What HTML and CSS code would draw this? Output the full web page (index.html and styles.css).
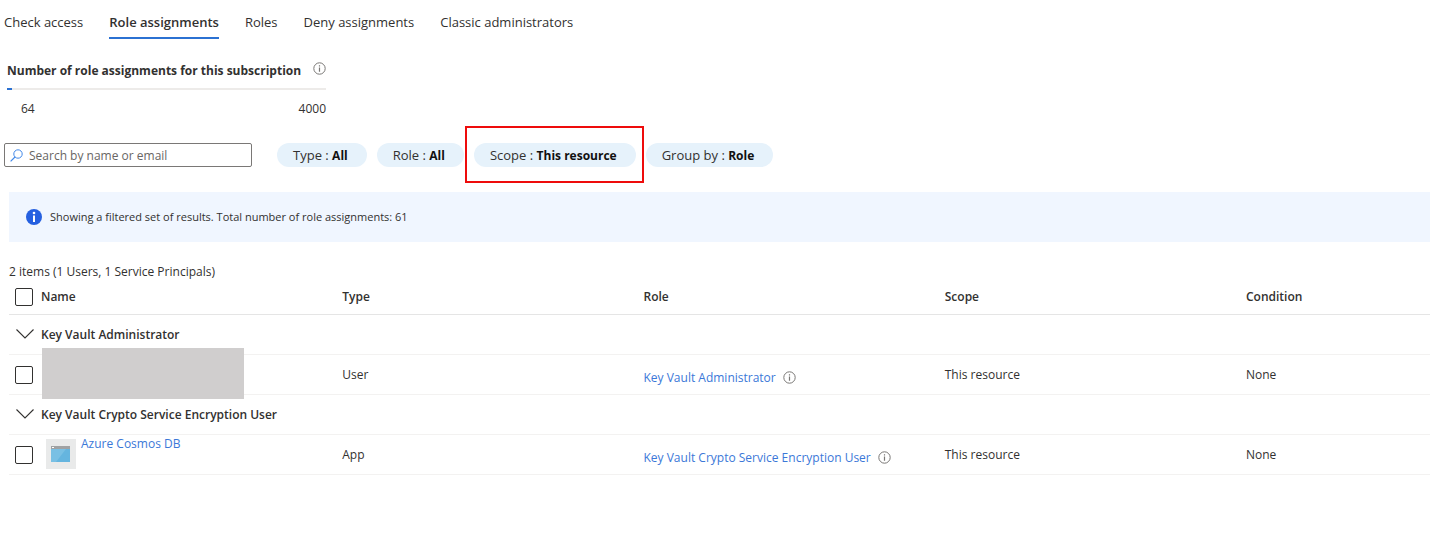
FILE: index.html
```html
<!DOCTYPE html>
<html lang="en">
<head>
<meta charset="utf-8">
<title>Role assignments</title>
<link rel="stylesheet" href="styles.css">
</head>
<body>
<svg class="defs" aria-hidden="true">
  <symbol id="info" viewBox="0 0 13 13">
    <circle cx="6.5" cy="6.5" r="5.7" fill="none" stroke="currentColor"/>
    <path d="M6.5 5.6V9.8M6.5 3.3V4.6" stroke="currentColor" stroke-width="1.2"/>
  </symbol>
  <symbol id="chevron" viewBox="0 0 18 10">
    <path d="M.5 .5L9 9L17.5 .5" fill="none" stroke="currentColor" stroke-width="1.1"/>
  </symbol>
</svg>
<nav class="tabs">
  <a class="tab" href="#check">Check access</a>
  <a class="tab tab-active" href="#assignments" aria-current="page">Role assignments</a>
  <a class="tab" href="#roles">Roles</a>
  <a class="tab" href="#deny">Deny assignments</a>
  <a class="tab" href="#classic">Classic administrators</a>
</nav>
<main>
  <section class="quota">
    <h2 class="quota-title">Number of role assignments for this subscription <svg class="info"><use href="#info"/></svg></h2>
    <div class="track"><div class="fill" style="width:1.6%"></div></div>
    <div class="quota-values"><span>64</span><span>4000</span></div>
  </section>
  <div class="filters">
    <label class="search">
      <svg class="search-icon" viewBox="0 0 13 13"><circle cx="8" cy="5" r="4.2" fill="none" stroke="currentColor"/><path d="M5 8L.6 12.4" stroke="currentColor" stroke-width="1.2"/></svg>
      <input class="search-input" type="text" placeholder="Search by name or email" aria-label="Search by name or email">
    </label>
    <button class="pill" type="button">Type : <b>All</b></button>
    <button class="pill" type="button">Role : <b>All</b></button>
    <button class="pill pill-marked" type="button">Scope : <b>This resource</b></button>
    <button class="pill" type="button">Group by : <b>Role</b></button>
  </div>
  <div class="banner" role="status">
    <svg class="banner-icon" viewBox="0 0 16 16"><circle cx="8" cy="8" r="8" fill="#2560e0"/><circle cx="8" cy="4" r="1.3" fill="#fff"/><path d="M8 6.5V13" stroke="#fff" stroke-width="2"/></svg>
    <span>Showing a filtered set of results. Total number of role assignments: 61</span>
  </div>
  <p class="summary">2 items (1 Users, 1 Service Principals)</p>
  <table class="grid">
    <thead>
      <tr>
        <th class="col-check"><input class="check" type="checkbox" aria-label="Select all"></th>
        <th class="col">Name</th><th class="col">Type</th><th class="col">Role</th><th class="col">Scope</th><th>Condition</th>
      </tr>
    </thead>
    <tbody>
      <tr class="group">
        <td><button class="toggle" type="button" aria-label="Collapse Key Vault Administrator"><svg class="chevron"><use href="#chevron"/></svg></button></td>
        <th colspan="5" scope="rowgroup">Key Vault Administrator</th>
      </tr>
      <tr class="item">
        <td><input class="check" type="checkbox" aria-label="Select user"></td>
        <td class="name"><div class="redacted"></div></td>
        <td>User</td>
        <td class="role"><a class="link" href="#kva">Key Vault Administrator</a><svg class="info"><use href="#info"/></svg></td>
        <td>This resource</td><td>None</td>
      </tr>
      <tr class="group">
        <td><button class="toggle" type="button" aria-label="Collapse Key Vault Crypto Service Encryption User"><svg class="chevron"><use href="#chevron"/></svg></button></td>
        <th colspan="5" scope="rowgroup">Key Vault Crypto Service Encryption User</th>
      </tr>
      <tr class="item">
        <td><input class="check" type="checkbox" aria-label="Select Azure Cosmos DB"></td>
        <td class="name"><div class="app">
          <svg class="app-icon" viewBox="0 0 30 30"><path d="M0 0H30V30H0Z" fill="#e9eaea"/><path d="M5 7H24V23H5Z" fill="#65b5df"/><path d="M5 10H20L10 23H5Z" fill="#79c0e4"/><path d="M5 7H24V10H5Z" fill="#a0a2a3"/><path d="M6 8H8V9H6Z" fill="#fff"/></svg>
          <a class="link" href="#cosmos">Azure Cosmos DB</a></div></td>
        <td>App</td>
        <td class="role"><a class="link" href="#kvc">Key Vault Crypto Service Encryption User</a><svg class="info"><use href="#info"/></svg></td>
        <td>This resource</td><td>None</td>
      </tr>
    </tbody>
  </table>
</main>
</body>
</html>
```
FILE: styles.css
```css
* { box-sizing: border-box; }
body {
  margin: 0;
  background: #fff;
  color: #323130;
  font: 12px/18px "Open Sans", "Noto Sans", sans-serif;
}
button, input { font: inherit; color: inherit; }
.defs { display: none; }
.tabs { display: flex; gap: 26px; padding: 13px 4px 0; font-size: 13px; }
.tab { padding-bottom: 6px; border-bottom: 2px solid transparent; color: inherit; text-decoration: none; white-space: nowrap; }
.tab-active { border-color: #2b71d2; font-weight: 600; }
.info { width: 13px; height: 13px; flex: none; color: #797775; }
.quota { width: 319px; margin: 22px 0 0 7px; }
.quota-title { display: flex; justify-content: space-between; margin: 0; font-size: 12px; line-height: 20px; font-weight: 700; white-space: nowrap; }
.quota-title .info { margin-top: 1px; }
.track { height: 2px; margin-top: 7px; background: #edebe9; }
.fill { height: 2px; background: #2b71d2; }
.quota-values { display: flex; justify-content: space-between; margin-top: 10px; padding-left: 14px; }
.filters { display: flex; align-items: center; gap: 10px; padding: 25px 4px 0; }
.search { display: flex; align-items: center; gap: 6px; width: 248px; height: 24px; margin-right: 15px; padding: 0 5px; border: 1px solid #7a7876; border-radius: 2px; }
.search-icon { width: 13px; height: 13px; flex: none; color: #4389e8; }
.search-input { flex: 1; min-width: 0; padding: 2px 0 0; border: 0; outline: 0; background: none; }
.search-input::placeholder { color: #686664; opacity: 1; }
.pill { position: relative; height: 24px; padding: 0 19px 0 16px; border: 0; border-radius: 12px; background: #e6f2fb; font-size: 13px; white-space: nowrap; }
.pill b { color: #111; font-size: 12px; }
.pill-marked::after { content: ""; position: absolute; inset: -17px -8px -16px -9px; border: 2px solid #ee0c0c; }
.banner { display: flex; align-items: center; gap: 8px; height: 50px; margin: 25px 0 0 9px; padding: 0 17px; background: #f0f6ff; font-size: 11px; }
.banner-icon { width: 16px; height: 16px; }
.summary { margin: 20px 0 0 9px; line-height: 19px; }
.grid { width: calc(100% - 9px); margin-left: 9px; table-layout: fixed; border-collapse: collapse; }
.grid th, .grid td { height: 40px; padding: 0; border-bottom: 1px solid #f3f2f1; text-align: left; vertical-align: middle; font-weight: 400; white-space: nowrap; }
.grid thead th { height: 33px; border-color: #e5e5e5; font-weight: 600; }
.grid .group th { padding-top: 2px; font-weight: 600; }
.grid .item td { padding-top: 2px; }
.col-check { width: 32px; }
.col { width: 21.2%; }
.check { appearance: none; display: block; width: 18px; height: 18px; margin: 0 0 0 6px; border: 1px solid #323130; border-radius: 2px; background: #fff; }
.toggle { display: block; margin-left: 7px; padding: 0; border: 0; background: none; }
.chevron { display: block; width: 18px; height: 10px; }
.link { color: #3b78d8; text-decoration: none; }
.grid .item .role { padding-top: 8px; }
.role .info { margin-left: 7px; vertical-align: -2px; }
.grid .item .name { position: relative; padding-top: 0; }
.redacted { position: absolute; top: -7px; left: 1px; width: 202px; height: 51px; background: #d0cece; }
.app { display: flex; gap: 5px; height: 30px; padding-left: 5px; }
.app .link { line-height: 10px; }
.app-icon { width: 30px; height: 30px; flex: none; }
```
